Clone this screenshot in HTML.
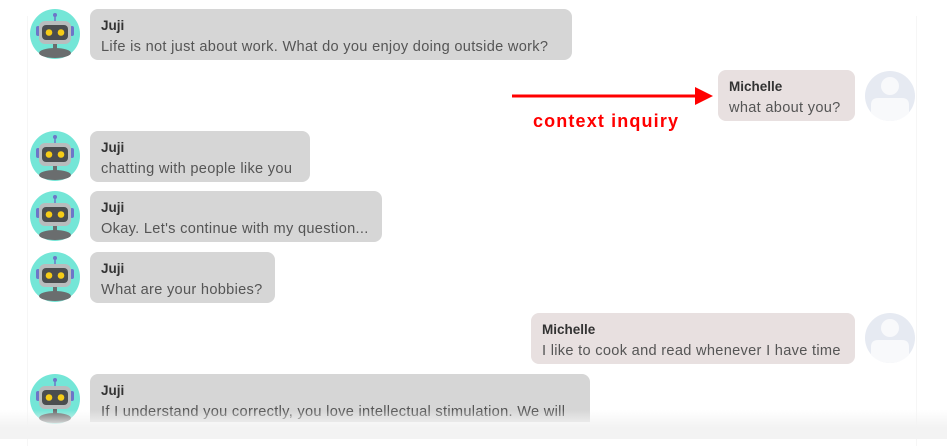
<!DOCTYPE html>
<html><head><meta charset="utf-8"><style>
*{margin:0;padding:0;box-sizing:border-box}
body{width:947px;height:439px;overflow:hidden;background:#fff;font-family:"Liberation Sans",sans-serif;position:relative}
.frame{position:absolute;left:27px;top:16px;width:890px;height:430px;border-left:1px solid #f6f6f6;border-right:1px solid #f6f6f6}
.fade{position:absolute;left:0;top:410px;width:947px;height:29px;background:linear-gradient(#fff0,#f3f3f3 60%)}
.b{position:absolute;height:51px;border-radius:8px;background:#d6d6d6;padding:9px 11px;white-space:nowrap;overflow:hidden}
.b.m{background:#e8e0e0}
.n{font-weight:bold;font-size:13.5px;color:#333;line-height:16px}
.t{font-size:14.6px;letter-spacing:0.3px;color:#555;line-height:18px;margin-top:4px}
.av{position:absolute;width:50px;height:50px}
</style></head><body>
<div class="frame"></div>
<svg width="0" height="0" style="position:absolute"><defs>
<g id="bot">
<circle cx="25" cy="25" r="25" fill="#74e6d7"/>
<ellipse cx="25" cy="44" rx="16" ry="5" fill="#6a6d6e"/>
<rect x="23" y="33" width="4" height="8" fill="#6a6d6e"/>
<rect x="6" y="17" width="4" height="10" rx="2" fill="#6d75c8"/>
<rect x="40" y="17" width="4" height="10" rx="2" fill="#6d75c8"/>
<line x1="25" y1="7" x2="25" y2="13" stroke="#6d75c8" stroke-width="1.5"/>
<circle cx="25" cy="6" r="2" fill="#6d75c8"/>
<rect x="9" y="12" width="32" height="23" rx="6" fill="#b8bcbd"/>
<rect x="12" y="16" width="26" height="15" rx="4" fill="#4a4d4f"/>
<circle cx="19" cy="23.5" r="3.3" fill="#f5cc17"/>
<circle cx="31" cy="23.5" r="3.3" fill="#f5cc17"/>
</g>
<g id="usr">
<circle cx="25" cy="25" r="25" fill="#e6eaf2"/>
<circle cx="25" cy="15" r="9" fill="#f8f9fb"/>
<path d="M6 42 V34 Q6 27 13 27 H37 Q44 27 44 34 V42 Q36 50 25 50 Q14 50 6 42Z" fill="#f8f9fb"/>
</g></defs></svg>

<svg class="av" style="left:30px;top:9px"><use href="#bot"/></svg>
<div class="b" style="left:90px;top:9px;width:482px"><div class="n">Juji</div><div class="t">Life is not just about work. What do you enjoy doing outside work?</div></div>

<svg style="position:absolute;left:505px;top:80px" width="215" height="60">
<rect x="7" y="14.5" width="185" height="3" fill="#f00"/>
<path d="M190 7 L208 16 L190 25Z" fill="#f00"/>
<text x="28" y="47" fill="#f00" font-family="Liberation Sans, sans-serif" font-weight="bold" font-size="18" textLength="145">context inquiry</text>
</svg>
<div class="b m" style="left:718px;top:70px;width:137px"><div class="n">Michelle</div><div class="t">what about you?</div></div>
<svg class="av" style="left:865px;top:71px"><use href="#usr"/></svg>

<svg class="av" style="left:30px;top:131px"><use href="#bot"/></svg>
<div class="b" style="left:90px;top:131px;width:220px"><div class="n">Juji</div><div class="t">chatting with people like you</div></div>

<svg class="av" style="left:30px;top:191px"><use href="#bot"/></svg>
<div class="b" style="left:90px;top:191px;width:292px"><div class="n">Juji</div><div class="t">Okay. Let's continue with my question...</div></div>

<svg class="av" style="left:30px;top:252px"><use href="#bot"/></svg>
<div class="b" style="left:90px;top:252px;width:185px"><div class="n">Juji</div><div class="t">What are your hobbies?</div></div>

<div class="b m" style="left:531px;top:313px;width:324px"><div class="n">Michelle</div><div class="t">I like to cook and read whenever I have time</div></div>
<svg class="av" style="left:865px;top:313px"><use href="#usr"/></svg>

<svg class="av" style="left:30px;top:374px"><use href="#bot"/></svg>
<div class="b" style="left:90px;top:374px;width:500px;height:48px;border-radius:8px 8px 0 0"><div class="n">Juji</div><div class="t">If I understand you correctly, you love intellectual stimulation. We will</div></div>
<div class="fade"></div>
</body></html>
